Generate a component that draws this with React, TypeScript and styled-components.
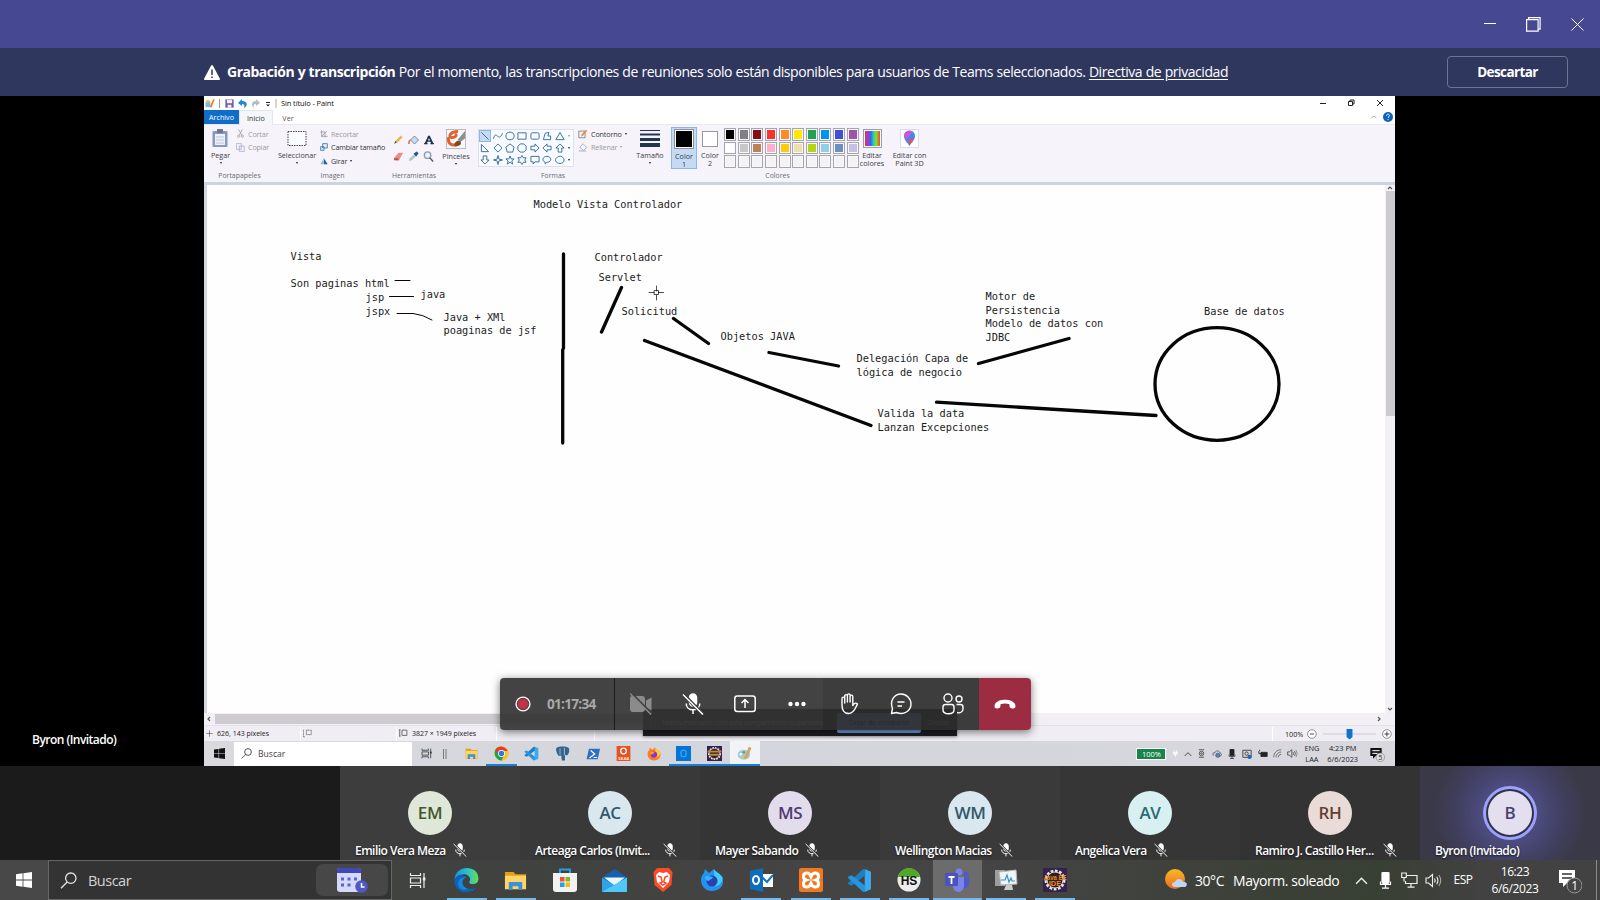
import React from "react";
import styled, { createGlobalStyle, css } from "styled-components";

const Global = createGlobalStyle`
  * { box-sizing: border-box; }
  body { margin: 0; background: #000; overflow: hidden; }
  #root { width: 1600px; height: 900px; }
`;

const ui = `"Open Sans", "Noto Sans", sans-serif`;

const Page = styled.div`
  width: 1600px;
  height: 900px;
  display: flex;
  flex-direction: column;
  background: #000;
  font-family: ${ui};
  color: #fff;
  white-space: nowrap;
`;

/* ---------- Teams window ---------- */
const TitleBar = styled.header`
  height: 48px;
  background: #464992;
  display: flex;
  justify-content: flex-end;
  align-items: center;
  gap: 30px;
  padding-right: 16px;
`;
const Banner = styled.div`
  height: 48px;
  background: #30375e;
  display: flex;
  align-items: center;
  padding: 0 32px 0 204px;
  font-size: 14px;
`;
const BannerText = styled.p`
  margin: 0 0 1px 7px;
  flex: 1;
  letter-spacing: -0.443px;
  word-spacing: 0.3px;
  b { letter-spacing: -0.49px; }
  u { text-underline-offset: 2px; }
`;
const Dismiss = styled.button`
  width: 121px;
  height: 32px;
  border: 1px solid #6e738f;
  border-radius: 4px;
  background: transparent;
  color: #fff;
  font: 700 13.5px ${ui};
  letter-spacing: -0.6px;
  padding: 0 0 1px;
`;
const Stage = styled.main`
  height: 670px;
  display: flex;
  position: relative;
`;
const Presenter = styled.div`
  width: 204px;
  display: flex;
  align-items: flex-end;
  padding: 0 0 16px 32px;
  font-size: 12px;
  font-weight: 600;
  letter-spacing: -0.53px;
  line-height: 20px;
`;

/* ---------- Shared Paint screen ---------- */
const Shared = styled.section`
  width: 1191px;
  height: 670px;
  display: flex;
  flex-direction: column;
  background: #fff;
  color: #222;
  position: relative;
  font-size: 7.2px;
`;
const PaintTitle = styled.div`
  height: 14px;
  display: flex;
  align-items: center;
  padding: 0 8.5px 0 1px;
  color: #111;
`;
const TitleName = styled.span`
  margin-left: 1px;
  flex: 1;
  font-size: 7.5px;
  letter-spacing: -0.12px;
`;
const PaintTabs = styled.div`
  height: 15px;
  display: flex;
  align-items: stretch;
  border-bottom: 1px solid #e8e8ee;
  padding-right: 2px;
`;
const Tab = styled.div<{ $kind?: "file" | "open"; $w: number }>`
  width: ${(p) => p.$w}px;
  height: 15px;
  display: flex;
  align-items: center;
  justify-content: center;
  color: #555;
  ${(p) => p.$kind === "file" && css`background: #0f6cc9; color: #fff; height: 14px;`}
  ${(p) => p.$kind === "open" && css`background: #f5f6fa; border: 1px solid #e3e4ec; border-bottom: 0; color: #333;`}
`;
const TabTail = styled.div`
  margin-left: auto;
  display: flex;
  align-items: center;
  gap: 6px;
`;
const Ribbon = styled.div`
  height: 57px;
  display: flex;
  background: linear-gradient(#f6f4fa 85%, #f1f6fa);
  flex: none;
`;
const Group = styled.div<{ $w: number; $shift?: number }>`
  width: ${(p) => p.$w}px;
  flex: none;
  display: flex;
  flex-direction: column;
  padding-top: 2px;
  > footer {
    height: 10px;
    line-height: 10px;
    font-size: 6.9px;
    color: #6b6b72;
    text-align: center;
    padding-left: ${(p) => p.$shift ?? 0}px;
  }
`;
const GroupBody = styled.div<{ $pad?: number }>`
  height: 44px;
  display: flex;
  padding-left: ${(p) => p.$pad ?? 0}px;
`;
const Big = styled.div<{ $w: number; $on?: boolean }>`
  width: ${(p) => p.$w}px;
  height: 42px;
  flex: none;
  display: flex;
  flex-direction: column;
  align-items: center;
  padding-top: ${(p) => (p.$on ? 1 : 2)}px;
  line-height: 8px;
  text-align: center;
  color: #3c3c44;
  ${(p) => p.$on && css`background: #c5dbf5; border: 1px solid #8cb6e6;`}
  > svg, > i { margin-bottom: 3px; flex: none; }
`;
const Caret = styled.i<{ $pale?: boolean; $below?: boolean }>`
  && { margin: ${(p) => (p.$below ? 3 : 0)}px 0 0; }
  border: 1.8px solid transparent;
  border-top: 2.4px solid ${(p) => (p.$pale ? "#999" : "#222")};
  border-bottom: 0;
  display: inline-block;
  vertical-align: middle;
`;
const SmallList = styled.div<{ $left: number }>`
  margin-left: ${(p) => p.$left}px;
  display: flex;
  flex-direction: column;
  letter-spacing: -0.14px;
`;
const Small = styled.div<{ $off?: boolean }>`
  height: 13.6px;
  display: flex;
  align-items: center;
  gap: 3px;
  color: ${(p) => (p.$off ? "#9b9ba2" : "#34343c")};
`;
const ToolGrid = styled.div`
  display: grid;
  grid-template-columns: repeat(3, 15px);
  grid-template-rows: 17px 17px;
  padding-top: 4px;
  place-items: center;
`;
const ShapeBox = styled.div`
  width: 96px;
  height: 38px;
  border: 1px solid #dbe2ec;
  background: #f8fbff;
  display: flex;
  margin-top: 2px;
`;
const ShapeGrid = styled.div`
  display: grid;
  grid-template-columns: repeat(7, 12.4px);
  grid-template-rows: repeat(3, 12px);
`;
const ShapeCell = styled.div<{ $on?: boolean }>`
  display: grid;
  place-items: center;
  ${(p) => p.$on && css`background: #c5dbf5; outline: 1px solid #8cb6e6; outline-offset: -1px;`}
`;
const ShapeScroll = styled.div`
  flex: 1;
  display: flex;
  flex-direction: column;
  justify-content: space-around;
  align-items: center;
`;
const Swatch = styled.i<{ $c: string; $s: number }>`
  width: ${(p) => p.$s}px;
  height: ${(p) => p.$s}px;
  background: ${(p) => p.$c};
  border: 1px solid #8d8d96;
  box-shadow: inset 0 0 0 1px #fff;
`;
const Palette = styled.div`
  display: grid;
  grid-template-columns: repeat(10, 12px);
  grid-template-rows: repeat(3, 12.6px);
  column-gap: 1.65px;
  row-gap: 1px;
  padding-top: 1px;
`;
const Cell = styled.i<{ $c: string }>`
  background: ${(p) => p.$c};
  border: 1px solid #a6a6ae;
  box-shadow: inset 0 0 0 1px #f8f8fa;
`;
const Work = styled.div`
  height: 531px;
  display: flex;
  border-top: 3px solid #ccd3df;
`;
const Canvas = styled.div`
  width: 1181px;
  height: 528px;
  border-left: 3px solid #d3d6e4;
  background: #fefefe;
  position: relative;
  flex: none;
`;
const Drawing = styled.svg`
  position: absolute;
  left: -3px;
  top: 0;
`;
const Note = styled.div<{ $x: number; $y: number }>`
  position: absolute;
  left: ${(p) => p.$x - 207.5}px;
  top: ${(p) => p.$y - 192}px;
  font: 10.3px/13.65px "DejaVu Sans Mono", monospace;
  white-space: pre;
  color: #1c1c1c;
`;
const VScroll = styled.div`
  width: 10px;
  background: #f2f0f5;
  display: flex;
  flex-direction: column;
  align-items: center;
  justify-content: space-between;
`;
const VThumb = styled.i`
  width: 9px;
  height: 225px;
  background: #cdcbd0;
  margin-bottom: auto;
`;
const HScroll = styled.div`
  height: 12px;
  background: #f2f0f5;
  display: flex;
  align-items: center;
  padding: 0 13px 0 2px;
  gap: 3px;
`;
const HThumb = styled.i`
  height: 10px;
  width: 640px;
  background: #cdcbd0;
  margin-right: auto;
`;
const StatusBar = styled.div`
  height: 16px;
  background: #f0eef4;
  border-top: 1px solid #e2e0e8;
  display: flex;
  align-items: center;
  color: #222;
`;
const StatusCell = styled.div<{ $w: number }>`
  width: ${(p) => p.$w}px;
  height: 14px;
  display: flex;
  align-items: center;
  gap: 4px;
  padding-left: 2px;
  border-right: 1px solid #fff;
  font-size: 7px;
`;
const ZoomCell = styled.div`
  margin-left: auto;
  width: 123px;
  height: 14px;
  border-left: 1px solid #fff;
  padding: 0 3px 0 12px;
  display: flex;
  align-items: center;
  gap: 4px;
`;
const InnerBar = styled.div`
  height: 25px;
  background: linear-gradient(90deg, #dadade, #d2d5db 45%, #d9d8de);
  display: flex;
  align-items: center;
`;
const InnerSearch = styled.div`
  width: 178px;
  height: 24px;
  background: #fff;
  display: flex;
  align-items: center;
  gap: 6px;
  padding-left: 7px;
  font-size: 8.6px;
  color: #444;
`;
const InnerApp = styled.div<{ $run?: boolean; $on?: boolean }>`
  width: 30.4px;
  height: 25px;
  display: grid;
  place-items: center;
  background: ${(p) => (p.$on ? "#f1f3f6" : "transparent")};
  box-shadow: ${(p) => (p.$run ? "inset 0 -2px #1c7fd6" : "none")};
`;
const InnerTray = styled.div`
  margin-left: auto;
  padding-right: 6px;
  display: flex;
  align-items: center;
  gap: 5.3px;
  color: #222;
  font-size: 7.4px;
  line-height: 11px;
  text-align: center;
`;
const Battery = styled.span`
  background: #17854a;
  color: #fff;
  border: 1px solid #fff;
  width: 30px;
  height: 12px;
  line-height: 10px;
`;
const Stacked = styled.div<{ $w: number }>`
  width: ${(p) => p.$w}px;
`;
const Notice = styled.div`
  position: absolute;
  left: 439px;
  top: 613px;
  width: 314px;
  height: 27px;
  background: #1d1e22;
  display: flex;
  align-items: center;
  padding: 0 7px 0 6px;
  gap: 6px;
  font-size: 6.9px;
  letter-spacing: -0.13px;
  color: #999;
  box-shadow: 0 1px 3px #0006;
`;
const NoticeButton = styled.span`
  margin-left: auto;
  width: 84px;
  flex: none;
  height: 20px;
  border-radius: 2px;
  background: #6f9be0;
  color: #000;
  line-height: 19px;
  text-align: center;
  letter-spacing: 0;
`;

/* ---------- Call controls ---------- */
const CallBar = styled.nav`
  position: absolute;
  left: 500px;
  top: 582px;
  width: 531px;
  height: 52px;
  border-radius: 4px;
  display: flex;
  overflow: hidden;
  box-shadow: 0 2px 9px #0008;
`;
const CallPart = styled.div<{ $w: number; $kind?: "dark" | "end"; $line?: boolean }>`
  width: ${(p) => p.$w}px;
  display: flex;
  align-items: center;
  background: ${(p) => (p.$kind === "end" ? "#9c2c42" : p.$kind === "dark" ? "rgba(44,44,44,.92)" : "rgba(51,51,51,.92)")};
  ${(p) => p.$line && css`border-right: 1px solid #1b1b1b;`}
`;
const CallButton = styled.div<{ $dim?: boolean }>`
  width: 52px;
  display: grid;
  place-items: center;
  color: ${(p) => (p.$dim ? "#8b8b8b" : "#fff")};
`;
const Timer = styled.span`
  margin: 0 0 1px 15px;
  font-size: 13.6px;
  font-weight: 700;
  letter-spacing: -0.72px;
  color: #a8a8a8;
`;

/* ---------- Participants ---------- */
const Strip = styled.section`
  height: 94px;
  display: flex;
  padding-left: 340px;
  background: #1b1b1b;
`;
const Tile = styled.div<{ $bg: string }>`
  width: 180px;
  height: 94px;
  background: ${(p) => p.$bg};
  display: flex;
  flex-direction: column;
  align-items: center;
  padding-top: 25px;
`;
const Avatar = styled.div<{ $bg: string; $fg: string; $live?: boolean }>`
  width: 44px;
  height: 44px;
  border-radius: 50%;
  background: ${(p) => p.$bg};
  color: ${(p) => p.$fg};
  font: 600 17px/44px ${ui};
  letter-spacing: -0.4px;
  text-align: center;
  ${(p) => p.$live && css`box-shadow: 0 0 0 2px #302f4c, 0 0 0 5px #9ea2ff, 0 0 30px 12px #7f85f522;`}
`;
const NameRow = styled.div<{ $gap: number }>`
  align-self: stretch;
  display: flex;
  align-items: center;
  gap: ${(p) => p.$gap}px;
  padding: 0 0 0 15px;
  margin-top: 5px;
  height: 20px;
  font-size: 12px;
  font-weight: 600;
  letter-spacing: -0.52px;
  text-shadow: 0 1px 2px #000a;
`;

/* ---------- Desktop taskbar ---------- */
const Taskbar = styled.footer`
  height: 40px;
  background: linear-gradient(90deg, #484848, #40423f 30%, #454545 60%, #383f33 86%, #424242 93%);
  display: flex;
  align-items: center;
`;
const StartButton = styled.div`
  width: 48px;
  display: grid;
  place-items: center;
`;
const SearchBox = styled.div`
  width: 344px;
  height: 40px;
  background: #333;
  border: 1px solid #666;
  display: flex;
  align-items: center;
  padding: 0 3px 0 11px;
  font-size: 14.5px;
  letter-spacing: -0.5px;
  color: #d4d4d4;
  gap: 11px;
`;
const Highlight = styled.div`
  margin-left: auto;
  width: 72px;
  height: 32px;
  border-radius: 7px;
  background: #474747;
  display: grid;
  place-items: center;
`;
const AppButton = styled.div<{ $run?: boolean; $on?: boolean; $w?: number }>`
  width: ${(p) => p.$w ?? 49.1}px;
  height: 40px;
  display: grid;
  place-items: center;
  background: ${(p) => (p.$on ? "#6c6c6c" : "transparent")};
  background-image: ${(p) => (p.$run || p.$on ? "linear-gradient(#76b9ed,#76b9ed)" : "none")};
  background-size: ${(p) => (p.$on ? "100%" : "40px")} 2px;
  background-position: bottom center;
  background-repeat: no-repeat;
`;
const Tray = styled.div`
  margin-left: auto;
  display: flex;
  align-items: center;
  font-size: 14px;
  letter-spacing: -0.45px;
`;
const Slot = styled.div<{ $w: number }>`
  width: ${(p) => p.$w}px;
  flex: none;
  display: flex;
  justify-content: center;
`;
const Weather = styled.div<{ $w: number }>`
  width: ${(p) => p.$w}px;
  flex: none;
  padding-left: 2px;
`;
const Lang = styled(Slot)`
  font-size: 12px;
  padding-bottom: 1px;
`;
const Clock = styled.div`
  width: 64px;
  font-size: 12px;
  line-height: 17px;
  text-align: center;
  letter-spacing: -0.4px;
  padding-bottom: 1px;
`;
const Edge = styled.i`
  width: 1px;
  height: 40px;
  background: #8a8a8a;
  margin-right: 3px;
`;

/* ---------- Icon helpers ---------- */
type IconProps = { w: number; h?: number; vb?: string; children: React.ReactNode; fill?: string; stroke?: string; sw?: number };
const Icon = ({ w, h = w, vb = "0 0 24 24", children, fill = "none", stroke = "none", sw = 1 }: IconProps) => (
  <svg width={w} height={h} viewBox={vb} fill={fill} stroke={stroke} strokeWidth={sw}>
    {children}
  </svg>
);

const Windows = ({ s, c }: { s: number; c: string }) => (
  <Icon w={s} vb="0 0 16 16" fill={c}>
    <path d="M0 2.2 6.6 1.3V7.6H0ZM7.4 1.2 16 0V7.6H7.4ZM0 8.4H6.6V14.7L0 13.8ZM7.4 8.4H16V16L7.4 14.8Z" />
  </Icon>
);
const Magnifier = ({ s, c }: { s: number; c: string }) => (
  <Icon w={s} vb="0 0 17 17" stroke={c} sw={1.3}>
    <circle cx="10.8" cy="6.2" r="5.2" />
    <path d="M7.2 10 1 16.2" />
  </Icon>
);
const TaskView = ({ s, c }: { s: number; c: string }) => (
  <Icon w={s} vb="0 0 17 17" stroke={c} sw={1.2}>
    <path d="M1.5 1V3.5H11.5V1M1.5 16V13.5H11.5V16M1.5 6H11.5V11H1.5ZM15 1V16" />
    <path d="M13.8 5.5h2.6v3h-2.6z" fill={c} stroke="none" />
  </Icon>
);
const MicOff = ({ s }: { s: number }) => (
  <Icon w={s} vb="0 0 22 22" stroke="currentColor" sw={1.5}>
    <rect x="7.5" y="1" width="7" height="12" rx="3.5" fill="currentColor" />
    <path d="M4.2 10.5c0 4 3 6.3 6.8 6.3s6.8-2.3 6.8-6.3M11 17v4" />
    <path d="M1.5 1.5 20.5 21" stroke="#3a3a3a" strokeWidth="3.5" />
    <path d="M1 1.5 21 21.5" />
  </Icon>
);
const VsCode = ({ s }: { s: number }) => (
  <Icon w={s}>
    <path d="M17 1 23 3.5v17L17 23Z" fill="#3caaf2" />
    <path d="M17.500 1.500V7L4.500 17 1 15.500v-1L15.500 1Z" fill="#1c80c9" />
    <path d="M17.500 22.500V17L4.500 7 1 8.500v1L15.500 23Z" fill="#2595e0" />
  </Icon>
);
const Folder = ({ s }: { s: number }) => (
  <Icon w={s}>
    <path d="M1 3h9l2 2.5h11V21H1Z" fill="#e3a010" />
    <path d="M1 7h22v14H1Z" fill="#fdd468" />
    <path d="M5 22V13.500h14V22h-4v-4H9v4Z" fill="#3a91d9" />
  </Icon>
);
const Firefox = ({ s, blue }: { s: number; blue?: boolean }) => (
  <Icon w={s}>
    <path d="M4 5 5 1l4 4 5-4c1 3 6 4 8.500 8.500C25 18 19 23 12 23S1 18 1 12c0-3 1-5 3-7Z" fill={blue ? "#2293f0" : "#ff7b1c"} />
    <path d="M14 1c1 3 6 4 8.500 8.500.500 5-4 9-8 9Z" fill={blue ? "#42cbff" : "#ffcc33"} />
    <circle cx="12" cy="13" r="5.500" fill={blue ? "#2b3fae" : "#8a35c9"} />
    <path d="M5 9c3-2 5 0 8 0-1 3-4 2-4 4-2 0-4-2-4-4Z" fill={blue ? "#35b4ff" : "#ff9a2b"} />
  </Icon>
);
const Eclipse = ({ s, label }: { s: number; label?: boolean }) => (
  <Icon w={s}>
    <rect width="24" height="24" fill="#33214f" />
    <circle cx="12" cy="12" r="9" stroke="#e8e4e0" strokeWidth="3" strokeDasharray="2.7 1.5" />
    <circle cx="12" cy="12" r="8" fill="#2a2025" stroke="#d8d0c8" />
    {label ? (
      <>
        <text x="12" y="11.5" fontSize="7.5" fontWeight="700" fontFamily="Liberation Sans, sans-serif" textAnchor="middle" fill="#f08a1c" textLength="23" lengthAdjust="spacingAndGlyphs">Java EE</text>
        <text x="12" y="18" fontSize="7.5" fontWeight="700" fontFamily="Liberation Sans, sans-serif" textAnchor="middle" fill="#f08a1c">IDE</text>
      </>
    ) : (
      <path d="M1 9h22M5 14h14" stroke="#c98735" strokeWidth="3" />
    )}
  </Icon>
);
const Speaker = ({ s, c }: { s: number; c: string }) => (
  <Icon w={s} vb="0 0 17 17" stroke={c} sw={1.1}>
    <path d="M1 6h2.500L7.500 2.500v12L3.500 11H1ZM9.500 6.500q1.300 2 0 4M11.700 4.800q2.400 3.700 0 7.400" />
    <path d="M13.900 3q3.600 5.500 0 11" opacity=".6" />
  </Icon>
);
const MicSolid = ({ s, c }: { s: number; c: string }) => (
  <Icon w={s} vb="0 0 17 17" stroke={c} sw={1.2}>
    <rect x="5" y="0" width="7" height="11.5" rx="1.5" fill={c} />
    <path d="M3.500 9.500v3h10v-3M8.500 12.500V16M5 16.200h7" />
  </Icon>
);
const ChevronUp = ({ s, c }: { s: number; c: string }) => (
  <Icon w={s} vb="0 0 12 12" stroke={c} sw={1.3}><path d="M1 9 6 4l5 5" /></Icon>
);
const Arrow = ({ d }: { d: string }) => (
  <Icon w={6} vb="0 0 6 6" stroke="#555" sw={1.2}><path d={d} /></Icon>
);

const shapes = [
  "M1 1 9 9", "M0 8C3-3 5 13 10 2", "M9.500 5A4.500 4.200 0 1 1 .5 5 4.500 4.200 0 1 1 9.500 5", "M.5 1.500h9v7h-9Z", "M2 1.500h6q1.500 0 1.500 1.500v4q0 1.500-1.500 1.500H2Q.5 8.500.5 7V3Q.5 1.500 2 1.500", "M1 9 3 2l4-1-1 4h3v4Z", "M5 1 9.500 9h-9Z",
  "M1 1v8h8Z", "M5 .5 9.500 5 5 9.500.5 5Z", "M5 .5 9.500 4 8 9.500H2L.5 4Z", "M3 .5h4L9.500 3v4L7 9.500H3L.5 7V3Z", "M.5 3H5V.5L9.500 5 5 9.500V7H.5Z", "M9.500 3H5V.5L.5 5 5 9.500V7h4.500Z", "M3 9.500V5H.5L5 .5 9.500 5H7v4.500Z",
  "M3 .5V5H.5L5 9.500 9.500 5H7V.5Z", "M5 0 6 4l4 1-4 1-1 4-1-4-4-1 4-1Z", "M5 .5 6.300 3.800H9.500L7 6l1 3.500-3-2-3 2L3 6 .5 3.800h3.200Z", "M5 0 6.500 2.500h3L8 5l1.500 2.500h-3L5 10 3.500 7.500h-3L2 5 .5 2.500h3Z", "M.5 1h9v6H5L3 9.500V7H.5Z", "M3 7.500C-1 6 0 1 5 1s6 6 0 6.500L3 9.500Z", "M2 8C-1 6 0 3 2 2c2-2 5-1 6 0 2 2 2 4 0 6-2 1-4 1-6 0Z",
];

const palette = [
  "#000", "#7f7f85", "#880b15", "#fb3227", "#ff8a27", "#ffe800", "#1fa350", "#0093ec", "#4250d0", "#a054a8",
  "#fff", "#c8c6cb", "#bf7f57", "#ffaecb", "#ffc90c", "#eadfae", "#b6d316", "#8fd0e8", "#6b90c0", "#c8bfe7",
  ...Array(10).fill("#f3f3f6"),
];

const notes: [number, number, string][] = [
  [534, 205, "Modelo Vista Controlador"],
  [291, 256.5, "Vista"],
  [291, 283.5, "Son paginas html"],
  [366, 297.5, "jsp"],
  [366, 311.5, "jspx"],
  [421, 294.5, "java"],
  [444, 317.5, "Java + XMl\npoaginas de jsf"],
  [595, 257.5, "Controlador"],
  [599, 277.5, "Servlet"],
  [622, 311.5, "Solicitud"],
  [721, 336.5, "Objetos JAVA"],
  [857, 359, "Delegación Capa de\nlógica de negocio"],
  [986, 297, "Motor de\nPersistencia\nModelo de datos con\nJDBC"],
  [1204.500, 311.5, "Base de datos"],
  [878, 414, "Valida la data\nLanzan Excepciones"],
];

const people: { i: string; n: string; bg: string; fg: string; tile: string; gap: number; live?: boolean }[] = [
  { i: "EM", n: "Emilio Vera Meza", bg: "#dfe8d8", fg: "#43572f", tile: "#3d3d3d", gap: 7 },
  { i: "AC", n: "Arteaga Carlos (Invit...", bg: "#d9e8ee", fg: "#31586b", tile: "#393939", gap: 13 },
  { i: "MS", n: "Mayer Sabando", bg: "#e3dced", fg: "#4f3b70", tile: "#353535", gap: 7 },
  { i: "WM", n: "Wellington Macias", bg: "#d9e8ee", fg: "#31586b", tile: "#3a3a3a", gap: 7 },
  { i: "AV", n: "Angelica Vera", bg: "#d9f0f2", fg: "#2b6a6e", tile: "#363636", gap: 7 },
  { i: "RH", n: "Ramiro J. Castillo Her...", bg: "#e9dcd8", fg: "#633f31", tile: "#333333", gap: 9 },
  { i: "B", n: "Byron (Invitado)", bg: "#e3dfee", fg: "#483f72", tile: "radial-gradient(circle at 50% 50%, #55548a 0, #464570 35%, #3a3948 75%)", gap: 0, live: true },
];

const PaintRibbon = () => (
  <Ribbon>
    <Group $w={71}>
      <GroupBody>
        <Big $w={33}>
          <Icon w={17} h={19} vb="0 0 17 19"><rect x=".5" y="2" width="15" height="16" rx="1" fill="#8799bd" /><rect x="3" y="5" width="10" height="11" fill="#eef2fa" /><rect x="5" y="0" width="6" height="4" fill="#6d7890" /><path d="M4 8h8M4 11h8M4 14h8" stroke="#b7c3da" /></Icon>
          Pegar<Caret $below />
        </Big>
        <SmallList $left={-1}>
          <Small $off><Icon w={9} stroke="#9a9aa5" sw={2}><path d="m7 1 8 15M17 1 9 16" /><circle cx="7" cy="19" r="3" /><circle cx="17" cy="19" r="3" /></Icon>Cortar</Small>
          <Small $off><Icon w={9} stroke="#a9adbb" sw={2}><path d="M1 1h13v16H1ZM9 8h13v15H9Z" fill="#eef" /></Icon>Copiar</Small>
        </SmallList>
      </GroupBody>
      <footer>Portapapeles</footer>
    </Group>
    <Group $w={115} $shift={-3}>
      <GroupBody>
        <Big $w={44}>
          <Icon w={20} h={19} vb="0 0 20 19"><rect x="1" y="2.5" width="18" height="14" stroke="#45454e" strokeDasharray="1.5 1" fill="#fbfcff" /></Icon>
          Seleccionar<Caret $below />
        </Big>
        <SmallList $left={1}>
          <Small $off><Icon w={8} stroke="#9a9aa5" sw={2.5}><path d="M5 1v18h18M1 6h14v16M4 20 20 3" /></Icon>Recortar</Small>
          <Small><Icon w={8} stroke="#3475ad" sw={2.5}><path d="M8 2h14v13H8ZM2 11h10v11H2Z" fill="#e5f0fb" /></Icon>Cambiar tamaño</Small>
          <Small><Icon w={8}><path d="M1 22 9 8v14Z" fill="#8db6db" /><path d="M11 22V3l12 19Z" fill="#1c5f9f" /></Icon>Girar <Caret /></Small>
        </SmallList>
      </GroupBody>
      <footer>Imagen</footer>
    </Group>
    <Group $w={48}>
      <GroupBody $pad={1}>
        <ToolGrid>
          <Icon w={11}><path d="M3 21 5 15 17 3l4 4L9 19Z" fill="#e8b44c" /><path d="m3 21 2-6 3 3Z" fill="#4b3a2a" /></Icon>
          <Icon w={12}><path d="m5 12 8-8 8 8-8 8Z" fill="#cddcec" stroke="#6d8cae" strokeWidth="2" /><path d="M5 12q-4 1-3 8" stroke="#da6c40" strokeWidth="3" /></Icon>
          <Icon w={10}><path d="M0 22v-2.500l2-.5L10 2h4l8 17 2 .5V22h-9v-2.500l2-.5-1.500-3h-7L7 19l2 .5V22ZM9.500 13h5L12 7Z" fill="#1e2f4d" /></Icon>
          <Icon w={11}><path d="m2 16 10-12h10L13 20H3Z" fill="#ec8d84" /><path d="m2 16h9l2 4H3Z" fill="#be5049" /></Icon>
          <Icon w={11}><path d="m2 22 2-6L14 7l4 4-10 9Z" fill="#a9c3d8" /><path d="m12 6 7-5 4 4-5 7Z" fill="#20548c" /></Icon>
          <Icon w={11} stroke="#8e9aab" sw={3}><circle cx="10" cy="9" r="7" fill="#e8f2fb" /><path d="m15 15 7 8" stroke="#555" /></Icon>
        </ToolGrid>
      </GroupBody>
      <footer>Herramientas</footer>
    </Group>
    <Group $w={36}>
      <GroupBody>
        <Big $w={36}>
          <Icon w={20} h={20}><rect x=".5" y=".5" width="23" height="23" fill="#fbfaf8" stroke="#b0aeb2" /><path d="M13 3C5 4 3 8 6 10c3 1 7-1 6-3M3 11c-1 8 6 10 10 6" stroke="#e2622f" strokeWidth="3.5" strokeLinecap="round" /><path d="m14 13 9-11v9l-6 5Z" fill="#8c9096" /><path d="M10 21c0-5 4-9 7-6s-1 6-7 6Z" fill="#7c4a24" /></Icon>
          Pinceles<Caret $below />
        </Big>
      </GroupBody>
    </Group>
    <Group $w={158}>
      <GroupBody $pad={4}>
        <ShapeBox>
          <ShapeGrid>
            {shapes.map((d, n) => (
              <ShapeCell key={n} $on={n === 0}><Icon w={10} vb="-.5 -.5 11 11" stroke="#31679c"><path d={d} /></Icon></ShapeCell>
            ))}
          </ShapeGrid>
          <ShapeScroll><Caret $pale /><Caret /><Caret /></ShapeScroll>
        </ShapeBox>
        <SmallList $left={4}>
          <Small><Icon w={10}><path d="M2 5h15v16H2Z" stroke="#777" strokeWidth="2" /><path d="m7 18 2-6L19 2l3 3-10 11Z" fill="#e88f45" /></Icon>Contorno <Caret /></Small>
          <Small $off><Icon w={10}><path d="m4 13 8-9 9 9-8 7Z" stroke="#9ba8b8" strokeWidth="2" /><path d="M2 20h18v3H2Z" fill="#b2bccb" /></Icon>Rellenar <Caret $pale /></Small>
        </SmallList>
      </GroupBody>
      <footer>Formas</footer>
    </Group>
    <Group $w={39}>
      <GroupBody>
        <Big $w={36}>
          <Icon w={20} h={19} vb="0 0 20 19" fill="#22364d"><path d="M0 1h20v1H0ZM0 4.500h20v2H0ZM0 9h20v3H0ZM0 14h20v4H0Z" /></Icon>
          Tamaño<Caret $below />
        </Big>
      </GroupBody>
    </Group>
    <Group $w={185} $shift={28}>
      <GroupBody>
        <Big $w={26} $on><Swatch $c="#000" $s={20} />Color<br />1</Big>
        <Big $w={26}><Icon w={16} h={19} vb="0 0 16 19"><rect x=".5" y="2.5" width="15" height="15" fill="#fff" stroke="#999" /></Icon>Color<br />2</Big>
        <Slot $w={1} />
        <Palette>{palette.map((c, n) => <Cell key={n} $c={c} />)}</Palette>
      </GroupBody>
      <footer>Colores</footer>
    </Group>
    <Group $w={76}>
      <GroupBody>
        <Big $w={32}>
          <Icon w={19} vb="0 0 19 19"><defs><linearGradient id="spectrum"><stop stopColor="#e8323c" /><stop offset=".2" stopColor="#9d3ad8" /><stop offset=".4" stopColor="#2a6de8" /><stop offset=".55" stopColor="#20ccb5" /><stop offset=".75" stopColor="#88dd30" /><stop offset="1" stopColor="#e84830" /></linearGradient></defs><rect x=".5" y=".5" width="18" height="18" fill="#fff" stroke="#9c9ca4" /><rect x="2" y="2" width="15" height="15" fill="url(#spectrum)" /></Icon>
          Editar<br />colores
        </Big>
        <Big $w={43}>
          <Icon w={19} vb="0 0 19 19"><rect x=".5" y=".5" width="18" height="18" fill="#fff" stroke="#ddd" /><path d="M9.500 17C7 13 4 11 4 7a5.500 5.500 0 0 1 11 0c0 4-3 6-5.500 10Z" fill="#358ff0" /><path d="M4 7a5.500 5.500 0 0 1 9-4L6 11Z" fill="#cc55d7" /><path d="m9 16-1-4 6-4q-1 5-5 8Z" fill="#ed4f62" /></Icon>
          Editar con<br />Paint 3D
        </Big>
      </GroupBody>
    </Group>
  </Ribbon>
);

const PaintScreen = () => (
  <Shared>
    <PaintTitle>
      <Icon w={10}><path d="M1 9h12v13H1Z" fill="#80b9de" /><path d="M11 22 20 2l3 2-7 18Z" fill="#e78134" /><path d="M3 5h8v6H3Z" fill="#e6bd5b" /></Icon>
      <Icon w={10} h={9} vb="0 0 10 9" stroke="#999"><path d="M4.500 0v9" /></Icon>
      <Icon w={9}><path d="M1 1h22v22H1Z" fill="#6a5c9e" /><path d="M5 2h14v9H5ZM7 15h10v8H7Z" fill="#f0eef8" /></Icon>
      <Icon w={17} h={9} vb="0 0 17 9"><path d="m4 4 4-4v2c6 0 6 5 2 7 1-3 0-4-2-4v2Z" fill="#2387d6" /></Icon>
      <Icon w={11} h={9} vb="0 0 11 9"><path d="M9 4 5 0v2c-5 0-5 5-2 7-1-3 0-4 2-4v2Z" fill="#b8bcc2" /></Icon>
      <Icon w={10} h={9} vb="0 0 10 9" fill="#222"><path d="M4 3h4v1H4ZM4 5.500h4L6 7.500Z" /></Icon>
      <Icon w={8} h={9} vb="0 0 8 9" stroke="#aaa"><path d="M4 0v9" /></Icon>
      <TitleName>Sin título - Paint</TitleName>
      <Icon w={68} h={8} vb="0 0 68 8" stroke="#222"><path d="M1 4.500h6" /><path d="M29.500 2.500h4v4h-4ZM31 2.500V1h4v4h-1.500" /><path d="m58 1 6 6M64 1l-6 6" /></Icon>
    </PaintTitle>
    <PaintTabs>
      <Tab $w={35} $kind="file">Archivo</Tab>
      <Tab $w={34} $kind="open">Inicio</Tab>
      <Tab $w={30}>Ver</Tab>
      <TabTail>
        <Icon w={6} vb="0 0 12 12" stroke="#aaa" sw={2}><path d="m1 8 5-4 5 4" /></Icon>
        <Icon w={10}><circle cx="12" cy="12" r="12" fill="#0c61b8" /><path d="M8.500 9c0-5 7-5 7-.5 0 3-3.500 3-3.500 6M12 17v2.500" stroke="#fff" strokeWidth="2.2" /></Icon>
      </TabTail>
    </PaintTabs>
    <PaintRibbon />
    <Work>
      <Canvas>
        <Drawing width="1181" height="528" viewBox="204 185 1181 528" fill="none" stroke="#060606" strokeWidth="3.3" strokeLinecap="round">
          <path d="M395 280.500h15M389.500 296.500h24M397 313.500h16q10 1 19 6.500" strokeWidth="1" />
          <path d="M563.500 254V348L562.700 350V443" />
          <path d="M621.500 287.500 601.500 332M673.500 318.500 708.500 343.500M769 352.500 838.500 366M644.500 340.500 871 425.500M978.500 363.500 1069 338.500M936.500 402.200 1156 415.500" />
          <ellipse cx="1217" cy="384" rx="62" ry="56.3" />
          <path d="M656.500 286v5M656.500 295v5M649 292.500h5M658.500 292.500h5M654.500 290.500h4v4h-4Z" strokeWidth=".7" />
        </Drawing>
        {notes.map(([x, y, t]) => <Note key={t} $x={x} $y={y}>{t}</Note>)}
      </Canvas>
      <VScroll><Arrow d="M1 4 3 2l2 2" /><VThumb /><Arrow d="M1 1 3 3l2-2" /></VScroll>
    </Work>
    <HScroll><Arrow d="M4 1 2 3l2 2" /><HThumb /><Arrow d="M2 1 4 3 2 5" /></HScroll>
    <StatusBar>
      <StatusCell $w={97}><Icon w={7} stroke="#444" sw={2}><path d="M12 1v22M1 12h22" /></Icon>626, 143 píxeles</StatusCell>
      <StatusCell $w={96}><Icon w={9} stroke="#555" sw={2}><path d="M1 2v19h4M9 3h13v12H9Z" strokeDasharray="3 1" /></Icon></StatusCell>
      <StatusCell $w={100}><Icon w={9} stroke="#444" sw={2}><path d="M2 2v17M0 2h4M0 19h4M8 3h13v14H8Z" /></Icon>3827 × 1949 píxeles</StatusCell>
      <StatusCell $w={98} />
      <ZoomCell>
        100%
        <Icon w={10} stroke="#777" sw={2}><circle cx="12" cy="12" r="10.5" fill="#fff" /><path d="M7 12h10" stroke="#222" /></Icon>
        <Icon w={58} h={12} vb="0 0 58 12"><path d="M2 6h54" stroke="#dcdce2" strokeWidth="2" /><path d="M26 1h6v8l-3 2.500L26 9Z" fill="#0c72d4" /></Icon>
        <Icon w={10} stroke="#777" sw={2}><circle cx="12" cy="12" r="10.5" fill="#fff" /><path d="M6 12h12M12 6v12" stroke="#222" /></Icon>
      </ZoomCell>
    </StatusBar>
    <InnerBar>
      <Slot $w={30}><Windows s={11} c="#111" /></Slot>
      <InnerSearch><Magnifier s={11} c="#333" />Buscar</InnerSearch>
      <Slot $w={28}><TaskView s={11} c="#333" /></Slot>
      <Slot $w={10}><Icon w={4} h={10} vb="0 0 4 10" stroke="#777"><path d="M.5 0v10M3 0v10" /></Icon></Slot>
      <Slot $w={6} />
      <InnerApp><Folder s={13} /></InnerApp>
      <InnerApp $run>
        <Icon w={15}><circle cx="12" cy="12" r="11.5" fill="#f7c325" /><path d="M2 6c-3 7 1 16 10 17.500L16 14Z" fill="#249f50" /><path d="m2 6 6 8 3-6h11C20 2 8-4 2 6Z" fill="#e23d30" /><circle cx="12" cy="12" r="5.5" fill="#fff" /><circle cx="12" cy="12" r="4.3" fill="#2b78e4" /></Icon>
      </InnerApp>
      <InnerApp><VsCode s={15} /></InnerApp>
      <InnerApp><Icon w={15}><path d="M2 3c5-3 15-3 20 0 2 4 0 10-3 12l-3-1v9h-5l-1-8-4 1C3 12 1 7 2 3Z" fill="#31658d" /><path d="M8 4v10M15 3v12" stroke="#e1e8ee" /></Icon></InnerApp>
      <InnerApp><Icon w={14}><path d="M5 3h19l-4 18H1Z" fill="#2a6fc5" /><path d="m8 6 7 6-9 7M13 18h6" stroke="#fff" strokeWidth="2" /></Icon></InnerApp>
      <InnerApp><Icon w={15}><rect x="1" width="22" height="24" fill="#e65321" /><circle cx="12" cy="8" r="4.5" stroke="#fff" strokeWidth="2" /><text x="12" y="22.5" fontSize="7" fontWeight="700" textAnchor="middle" fontFamily="Liberation Sans, sans-serif" fill="#fff">18.04</text></Icon></InnerApp>
      <InnerApp><Firefox s={14} /></InnerApp>
      <InnerApp $run><Icon w={15}><rect width="24" height="24" fill="#0873d6" /><rect x="8" y="7" width="8" height="10" rx="3" stroke="#35aaf5" strokeWidth="2" /></Icon></InnerApp>
      <InnerApp $run><Eclipse s={15} /></InnerApp>
      <InnerApp $run $on><Icon w={15}><ellipse cx="11" cy="14" rx="10" ry="8" fill="#9ccce2" /><circle cx="6" cy="13" r="2" fill="#fff" /><circle cx="8" cy="18" r="2" fill="#e5c251" /><circle cx="11" cy="10" r="2" fill="#5ba758" /><path d="M11 20 19 1l4 2-7 17Z" fill="#dca056" /></Icon></InnerApp>
      <InnerTray>
        <Battery>100%</Battery>
        <Icon w={7}><path d="M6 2v5H3v8h6v8h5v-8h6V7h-3V2h-3v5H9V2Z" fill="#f8f8fa" /></Icon>
        <ChevronUp s={8} c="#333" />
        <Icon w={9} stroke="#333" sw={2}><circle cx="12" cy="12" r="6" /><path d="M5 2h14M5 22h14" /><circle cx="12" cy="12" r="2" /></Icon>
        <Icon w={10} stroke="#557" sw={2}><path d="M5 16C0 14 2 7 7 9c1-6 12-6 12 1 5 0 5 7 0 7" /><circle cx="14" cy="15" r="5" fill="#3b8fda" /></Icon>
        <MicSolid s={10} c="#222" />
        <Icon w={10} stroke="#333" sw={2}><path d="M2 3h20v17H2Z" /><circle cx="11" cy="11" r="4" /><circle cx="18" cy="19" r="5" fill="#1769bf" stroke="none" /></Icon>
        <Icon w={10} stroke="#222" sw={2}><path d="M7 8h15v10H7Z" fill="#222" /><path d="M2 5v6h5M4 2v3" /></Icon>
        <Icon w={9} stroke="#555" sw={2}><path d="M2 22C2 10 10 2 22 2M8 22C8 14 14 8 22 8M14 22q0-8 8-8" /></Icon>
        <Speaker s={11} c="#333" />
        <Stacked $w={17}>ENG<br />LAA</Stacked>
        <Stacked $w={34}>4:23 PM<br />6/6/2023</Stacked>
        <Slot $w={24}><Icon w={16} h={16}><path d="M2 3h17v12h-9l-4 4v-4H2Z" fill="#111" /><path d="M5 7h11M5 11h8" stroke="#fff" strokeWidth="1.5" /><circle cx="17" cy="17" r="6.5" fill="#dcdce0" stroke="#888" /><text x="17" y="20.5" fontSize="10" textAnchor="middle" fontFamily="Open Sans, sans-serif" fill="#222">5</text></Icon></Slot>
      </InnerTray>
    </InnerBar>
    <Notice><span>||</span><span>teams.microsoft.com está compartiendo tu pantalla.</span><NoticeButton>Dejar de compartir</NoticeButton><span>Ocultar</span></Notice>
  </Shared>
);

const Controls = () => (
  <CallBar>
    <CallPart $w={115} $line>
      <Slot $w={32}><Slot $w={14} /><Icon w={16} vb="0 0 16 16"><circle cx="8" cy="8" r="6.9" fill="#c4314b" stroke="#fff" strokeWidth="1.4" /><circle cx="8" cy="8" r="5.5" stroke="#444" strokeWidth="1" /></Icon></Slot>
      <Timer>01:17:34</Timer>
    </CallPart>
    <CallPart $w={208}>
      <CallButton $dim><Icon w={22} vb="0 0 22 22"><path d="M2 3h10q3 0 3 3v10q0 3-3 3H3q-3 0-3-3V5q0-2 2-2ZM16 7.500l5.500-3v13L16 14.500Z" fill="currentColor" /><path d="M1 0 22 21" stroke="#444" strokeWidth="2.5" /><path d="M0 .5 21 21.500" stroke="currentColor" strokeWidth="1.3" /></Icon></CallButton>
      <CallButton><MicOff s={22} /></CallButton>
      <CallButton><Icon w={22} h={18} vb="0 0 22 18" stroke="currentColor" sw={1.5}><rect x=".8" y="1" width="20.4" height="15.5" rx="2.5" /><path d="M11 13V4.500M7.500 8 11 4.500 14.500 8" /></Icon></CallButton>
      <CallButton><Icon w={20} h={6} vb="0 0 20 6" fill="currentColor"><circle cx="3.5" cy="3" r="2.2" /><circle cx="10" cy="3" r="2.2" /><circle cx="16.5" cy="3" r="2.2" /></Icon></CallButton>
    </CallPart>
    <CallPart $w={156} $kind="dark">
      <CallButton><Icon w={20} h={22} vb="0 0 20 22" stroke="currentColor" sw={1.4}><path d="M3 12V5.500a1.300 1.300 0 0 1 2.700 0V10 3a1.300 1.300 0 0 1 2.700 0v6V2.200a1.300 1.300 0 0 1 2.700 0V9 3.500a1.300 1.300 0 0 1 2.700 0V12.500c2-3 3.700-2.700 4.700-1.500-2 3-3 9.500-9 9.500C5 20.500 3 17 3 12Z" strokeLinejoin="round" /></Icon></CallButton>
      <CallButton><Icon w={22} vb="0 0 22 22" stroke="currentColor" sw={1.4}><path d="M1.500 20.500 2.500 15.500C-.5 8 4 1 11 1c5.500 0 10 4.500 10 10 0 7-7.500 11.500-14.500 8.500ZM7.500 9h7M7.500 13h4.500" strokeLinejoin="round" /></Icon></CallButton>
      <CallButton><Icon w={22} vb="0 0 22 22" stroke="currentColor" sw={1.4}><circle cx="6" cy="5" r="4" /><circle cx="17" cy="6" r="3" /><path d="M1 14q0-2.500 2.500-2.500h6q2.500 0 2.500 2.500v3c0 5-11 5-11 0ZM14.500 11.500h4q2.500 0 2.500 2.500v2c0 3-3 4.500-6 3.500" /></Icon></CallButton>
    </CallPart>
    <CallPart $w={52} $kind="end">
      <CallButton><Icon w={22} h={11} vb="0 0 22 11" fill="currentColor"><path d="M1 5C4-.8 18-.8 21 5c1.200 3.500 0 4.800-2.500 4.500-3-.4-3-1.300-3-4.200-3-1-6-1-9 0 0 2.900 0 3.800-3 4.200C1 9.800-.2 8.500 1 5Z" /></Icon></CallButton>
    </CallPart>
  </CallBar>
);

const DesktopBar = () => (
  <Taskbar>
    <StartButton><Windows s={16} c="#fff" /></StartButton>
    <SearchBox>
      <Magnifier s={17} c="#e4e4e4" />Buscar
      <Highlight>
        <Icon w={32} h={26} vb="0 0 32 26"><rect x="1" y="1" width="24" height="24" rx="3" fill="#d5dafa" /><path d="M1 6V3q0-2 2-2h20q2 0 2 2v3Z" fill="#3e48b8" /><path d="M5 12h3M11.500 12h3M18 12h3M5 18h3M11.500 18h3" stroke="#5a62d8" strokeWidth="3" /><circle cx="25.5" cy="19.5" r="6.3" fill="#5058c6" /><path d="M25.500 16v4h3" stroke="#fff" strokeWidth="1.5" /></Icon>
      </Highlight>
    </SearchBox>
    <AppButton $w={50.3}><TaskView s={17} c="#eee" /></AppButton>
    <AppButton $run>
      <Icon w={25}><defs><linearGradient id="edge" x1="0" x2="1"><stop stopColor="#1c8ee0" /><stop offset=".6" stopColor="#2dc6c8" /><stop offset="1" stopColor="#69dc4f" /></linearGradient></defs><path d="M.5 12C0-3 23-4 23.500 10c0 5-4 6-8 5-2-1 0-2 0-4 0-3-3-5-6-5-5 0-8 3-9 6Z" fill="url(#edge)" /><path d="M.5 12C2 6 9 6 12 9c-6 1-5 10 2 11 3 .5 6 0 8-2-3 5-9 6-13 5C4 22 .5 18 .5 12Z" fill="#0c62b8" /><path d="M12 9c-6 1-5 10 2 11-5 2-10 0-10-5 0-4 4-7 8-6Z" fill="#1489dc" /></Icon>
    </AppButton>
    <AppButton $run><Folder s={23} /></AppButton>
    <AppButton><Icon w={24}><path d="M7 6V1.500h10V6" stroke="#20a0e8" strokeWidth="2" /><path d="M0 5h24v16q0 3-3 3H3q-3 0-3-3Z" fill="#f2f2f2" /><path d="M7 9h4.500v4.500H7Z" fill="#f0502a" /><path d="M12.500 9H17v4.500h-4.500Z" fill="#7fba20" /><path d="M7 14.500h4.500V19H7Z" fill="#19a5e8" /><path d="M12.500 14.500H17V19h-4.500Z" fill="#fcb61a" /></Icon></AppButton>
    <AppButton><Icon w={25}><path d="M0 9 12 1l12 8v14H0Z" fill="#1460ae" /><path d="M2 9h20L12 17Z" fill="#e8f5fc" /><path d="M0 9v14h24V9L12 16.500Z" fill="#2aa5ea" /><path d="M0 23 24 9v14Z" fill="#50c8f7" /></Icon></AppButton>
    <AppButton><Icon w={24}><path d="m6 0h12l3.500 4-1 13-8.500 7-8.500-7L2.500 4Z" fill="#fb4a24" /><path d="m8 4 4 1 4-1 3 3-1 7-6 6-6-6-1-7Z" fill="#fff" /><path d="m7 8 3 1 1 4M17 8l-3 1-1 4M9 15l3-1.500 3 1.500-3 2Z" stroke="#fb4a24" strokeWidth="1.5" /></Icon></AppButton>
    <AppButton><Firefox s={24} blue /></AppButton>
    <AppButton $run><Icon w={24}><path d="M12 6h12v13H12Z" fill="#fff" /><path d="m12 8 6 6 6-7" stroke="#1470c0" strokeWidth="2" /><path d="M1 3 14 0v24L1 21Z" fill="#0f6dbe" /><ellipse cx="7" cy="12" rx="3" ry="4" stroke="#fff" strokeWidth="2" /></Icon></AppButton>
    <AppButton $run><Icon w={24}><rect width="24" height="24" rx="2" fill="#ed7a22" /><path d="M8 5c3 0 3 2 4 4 1-2 1-4 4-4 5 0 4 6 1 7 3 1 4 7-1 7-3 0-3-2-4-4-1 2-1 4-4 4-5 0-4-6-1-7-3-1-4-7 1-7Z" stroke="#fff" strokeWidth="3" /></Icon></AppButton>
    <AppButton $run><VsCode s={25} /></AppButton>
    <AppButton $run><Icon w={24}><circle cx="12" cy="12" r="11.5" fill="#ececec" /><path d="M1 9C4-3 20-3 23 9Z" fill="#50a826" /><text x="12" y="16.5" fontSize="12" fontWeight="700" fontFamily="Liberation Sans, sans-serif" textAnchor="middle" fill="#111">HS</text></Icon></AppButton>
    <AppButton $on $w={48.4}><Icon w={24}><circle cx="14" cy="4" r="3.5" fill="#7b83eb" /><circle cx="21" cy="6" r="2.5" fill="#5059c9" /><path d="M17 9h7v7c0 3-3 5-6 4Z" fill="#5059c9" /><path d="M8 9h11v8c0 9-11 9-11 1Z" fill="#7b83eb" /><rect y="5" width="13" height="13" rx="1" fill="#4b53bc" /><path d="M3.500 9h6M6.500 9v7" stroke="#fff" strokeWidth="1.8" /></Icon></AppButton>
    <AppButton $run><Icon w={24}><rect x="1" y="2" width="10" height="16" fill="#9b9d9e" /><path d="M5 4 22 2l1 14-16 1Z" fill="#eef4f7" stroke="#b6b9bc" /><path d="M7 12h4l2-5 2 7 2-4 1 3h3" stroke="#3d91bf" strokeWidth="1.2" /><path d="M12 17h6l1 5H10Z" fill="#ccc" /></Icon></AppButton>
    <AppButton $run><Eclipse s={24} label /></AppButton>
    <Tray>
      <Slot $w={34}><Icon w={24} h={22} vb="0 0 24 22"><defs><linearGradient id="sun" x2="0" y2="1"><stop stopColor="#f7ba26" /><stop offset="1" stopColor="#f16a20" /></linearGradient></defs><circle cx="11" cy="10" r="10" fill="url(#sun)" /><path d="M11 18c-4 0-4-5 0-5 1-4 7-4 8 0 5-1 5 5 1 5Z" fill="#bcd6f8" /></Icon></Slot>
      <Weather $w={38}>30°C</Weather>
      <Weather $w={117}>Mayorm. soleado</Weather>
      <Slot $w={26}><ChevronUp s={13} c="#eee" /></Slot>
      <Slot $w={22}><MicSolid s={17} c="#fff" /></Slot>
      <Slot $w={26}><Icon w={17} vb="0 0 17 17" stroke="#eee" sw={1.2}><path d="M6 3.500h10v8H4.500V9M10 11.500V15M6.500 15.200h7M.7 1h4.600v4.500H.7ZM3 5.500v4" /></Icon></Slot>
      <Slot $w={22}><Speaker s={17} c="#eee" /></Slot>
      <Slot $w={1} />
      <Lang $w={36}>ESP</Lang>
      <Slot $w={2} />
      <Clock>16:23<br />6/6/2023</Clock>
      <Slot $w={41}><Icon w={28} h={28} vb="0 0 28 28"><path d="M5 4h16v13h-8l-4 4v-4H5Z" fill="#fff" /><path d="M8 8h10M8 12h10" stroke="#333" strokeWidth="1.3" /><circle cx="20.5" cy="19.5" r="7.5" fill="#454545" stroke="#999" /><text x="20.5" y="24" fontSize="12" textAnchor="middle" fontFamily="Open Sans, sans-serif" fill="#fff">1</text></Icon></Slot>
      <Slot $w={8} />
      <Edge />
    </Tray>
  </Taskbar>
);

export default function App() {
  return (
    <Page>
      <Global />
      <TitleBar>
        <Icon w={12} h={12} vb="0 0 12 12" stroke="#fff"><path d="M0 5.500h12" /></Icon>
        <Icon w={15} h={15} vb="0 0 15 15" stroke="#fff" sw={1.2}><path d="M.6 2.600h11.500v11.500H.6ZM2.600 2.600V.6h11.500v11.500h-2" /></Icon>
        <Icon w={13} h={13} vb="0 0 13 13" stroke="#fff"><path d="m.5.5 12 12M12.500.5l-12 12" /></Icon>
      </TitleBar>
      <Banner>
        <Icon w={16} h={15} vb="0 0 16 15"><path d="M7 .8q1-1.600 2 0l6.800 12.700q.5 1.500-1 1.500H1.200q-1.500 0-1-1.500Z" fill="#fff" /><path d="M8 4.500V10M8 11.500V13" stroke="#30375e" strokeWidth="1.5" /></Icon>
        <BannerText><b>Grabación y transcripción</b> Por el momento, las transcripciones de reuniones solo están disponibles para usuarios de Teams seleccionados. <u>Directiva de privacidad</u></BannerText>
        <Dismiss>Descartar</Dismiss>
      </Banner>
      <Stage>
        <Presenter>Byron (Invitado)</Presenter>
        <PaintScreen />
        <Controls />
      </Stage>
      <Strip>
        {people.map((p) => (
          <Tile key={p.i} $bg={p.tile}>
            <Avatar $bg={p.bg} $fg={p.fg} $live={p.live}>{p.i}</Avatar>
            <NameRow $gap={p.gap}>{p.n}{!p.live && <MicOff s={14} />}</NameRow>
          </Tile>
        ))}
      </Strip>
      <DesktopBar />
    </Page>
  );
}
